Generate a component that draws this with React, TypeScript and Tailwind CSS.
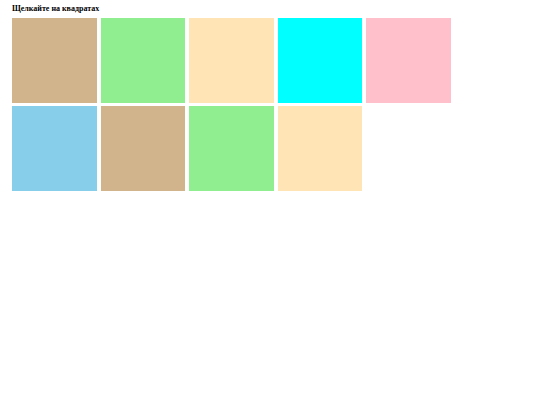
const colors = [
  "bg-[#d2b48c]",
  "bg-[#90ee90]",
  "bg-[#ffe4b5]",
  "bg-[#00ffff]",
  "bg-[#ffc0cb]",
  "bg-[#87ceeb]",
  "bg-[#d2b48c]",
  "bg-[#90ee90]",
  "bg-[#ffe4b5]",
];

export default function App() {
  return (
    <div className="min-h-[405px] bg-white pl-[12px] pt-[4px]" style={{ fontFamily: '"Liberation Serif", serif' }}>
      <h1 className="text-[8px] font-bold leading-[10px] text-black">Щелкайте на квадратах</h1>
      <div className="mt-[4px] grid w-[440px] grid-cols-[repeat(5,84.5px)] gap-x-[4px] gap-y-[3.5px]">
        {colors.map((c, i) => (
          <div key={i} className={`h-[84.5px] w-[84.5px] cursor-pointer ${c}`} />
        ))}
      </div>
    </div>
  );
}
